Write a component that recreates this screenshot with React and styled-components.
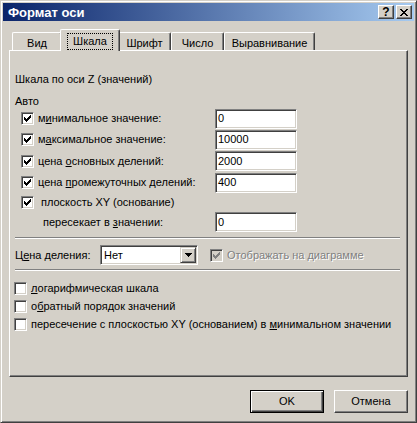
import React from "react"
import styled, { createGlobalStyle } from "styled-components"

const GlobalStyle = createGlobalStyle`
  body {
    margin: 0;
    background: #D4D0C8;
    font-family: "Liberation Sans", Arial, sans-serif;
    font-size: 11px;
    color: #000;
  }
`

const Window = styled.div`
  width: 417px;
  height: 423px;
  box-sizing: border-box;
  background: #D4D0C8;
  border: 1px solid;
  border-color: #D4D0C8 #404040 #404040 #D4D0C8;
  box-shadow: inset 1px 1px #fff, inset -1px -1px #808080;
  padding: 2px;
  display: flex;
  flex-direction: column;
`

const TitleBar = styled.div`
  height: 18px;
  flex: none;
  display: flex;
  align-items: center;
  padding: 0 2px 0 5px;
  background: linear-gradient(to right, #0A246A, #A6CAF0);
`

const Title = styled.div`
  flex: 1;
  color: #fff;
  font-weight: bold;
  font-size: 13px;
  line-height: 15px;
`

const TitleButton = styled.div`
  width: 16px;
  height: 14px;
  box-sizing: border-box;
  margin-left: 2px;
  background: #D4D0C8;
  border: 1px solid;
  border-color: #fff #404040 #404040 #fff;
  box-shadow: inset -1px -1px #808080;
  display: flex;
  align-items: center;
  justify-content: center;
  font-weight: bold;
  font-size: 12px;
  line-height: 12px;
`

const Body = styled.div`
  flex: 1;
  padding: 8px 6px 0 6px;
  display: flex;
  flex-direction: column;
`

const TabRow = styled.div`
  height: 21px;
  display: flex;
  align-items: flex-end;
  padding-left: 3px;
`

const Tab = styled.div`
  position: relative;
  box-sizing: border-box;
  width: ${p => p.$w}px;
  height: ${p => (p.$active ? 22 : 18)}px;
  margin: ${p => (p.$active ? "0 -2px -1px -2px" : "0")};
  z-index: ${p => (p.$active ? 1 : 0)};
  padding-top: ${p => (p.$active ? 3 : 4)}px;
  background: #D4D0C8;
  border-left: 1px solid #fff;
  border-top: 1px solid #fff;
  border-right: 1px solid #404040;
  border-top-left-radius: 2px;
  border-top-right-radius: 2px;
  box-shadow: inset -1px 0 #808080;
  text-align: center;
  line-height: 13px;
`

const FocusLabel = styled.span`
  display: inline-block;
  border: 1px dotted #000;
  padding: 1px 5px;
  line-height: 13px;
`

const Panel = styled.div`
  height: 327px;
  flex: none;
  box-sizing: border-box;
  border: 1px solid;
  border-color: #fff #404040 #404040 #fff;
  box-shadow: inset -1px -1px #808080;
  padding: 0 7px 0 5px;
  display: flex;
  flex-direction: column;
`

const Caption = styled.div`
  line-height: 13px;
  margin-top: ${p => p.$mt}px;
`

const AutoList = styled.div`
  padding-left: 6px;
  display: flex;
  flex-direction: column;
`

const AutoRow = styled.div`
  height: ${p => p.$h}px;
  display: grid;
  grid-template-columns: 17px 177px 82px;
  align-items: center;
  line-height: 13px;
`

const Label = styled.span`
  grid-column: ${p => p.$col || "auto"};
  padding-left: ${p => p.$pl || 0}px;
  white-space: nowrap;
  color: ${p => (p.$disabled ? "#808080" : "#000")};
  text-shadow: ${p => (p.$disabled ? "1px 1px 0 #fff" : "none")};
`

const U = styled.span`
  text-decoration: underline;
`

const Field = styled.div`
  grid-column: 3;
  width: 82px;
  height: 20px;
  box-sizing: border-box;
  background: #fff;
  border: 1px solid;
  border-color: #808080 #fff #fff #808080;
  box-shadow: inset 1px 1px #404040, inset -1px -1px #D4D0C8;
  padding-left: 2px;
  display: flex;
  align-items: center;
  line-height: 13px;
`

const Box = styled.div`
  width: 13px;
  height: 13px;
  box-sizing: border-box;
  background: ${p => (p.$disabled ? "#D4D0C8" : "#fff")};
  border: 1px solid;
  border-color: #808080 #fff #fff #808080;
  box-shadow: inset 1px 1px #404040, inset -1px -1px #D4D0C8;
  display: flex;
  align-items: center;
  justify-content: center;
  flex: none;
`

const Separator = styled.div`
  height: 0;
  border-top: 1px solid #808080;
  border-bottom: 1px solid #fff;
  margin-top: ${p => p.$mt}px;
`

const ScaleRow = styled.div`
  height: 20px;
  margin-top: 6px;
  display: flex;
  align-items: center;
  line-height: 13px;
`

const ScaleLabel = styled.span`
  width: 85px;
  flex: none;
`

const Select = styled.div`
  width: 98px;
  height: 20px;
  box-sizing: border-box;
  background: #fff;
  border: 1px solid;
  border-color: #808080 #fff #fff #808080;
  box-shadow: inset 1px 1px #404040, inset -1px -1px #D4D0C8;
  padding: 1px 1px 1px 3px;
  display: flex;
  align-items: center;
  justify-content: space-between;
  flex: none;
`

const DropButton = styled.div`
  width: 16px;
  height: 16px;
  box-sizing: border-box;
  background: #D4D0C8;
  border: 1px solid;
  border-color: #D4D0C8 #404040 #404040 #D4D0C8;
  box-shadow: inset 1px 1px #fff, inset -1px -1px #808080;
  display: flex;
  align-items: center;
  justify-content: center;
`

const ShowOption = styled.div`
  margin-left: 12px;
  display: flex;
  align-items: center;
  gap: 4px;
`

const OptionList = styled.div`
  margin-top: 8px;
  margin-left: -1px;
  display: flex;
  flex-direction: column;
`

const OptionRow = styled.div`
  height: 18px;
  display: flex;
  align-items: center;
  gap: 4px;
  line-height: 13px;
  white-space: nowrap;
`

const Footer = styled.div`
  margin-top: 13px;
  display: flex;
  justify-content: flex-end;
  gap: 10px;
`

const Button = styled.div`
  width: 74px;
  height: 23px;
  box-sizing: border-box;
  background: #D4D0C8;
  border: 1px solid;
  border-color: ${p => (p.$default ? "#000" : "#fff #404040 #404040 #fff")};
  box-shadow: ${p =>
    p.$default
      ? "inset 1px 1px #fff, inset -1px -1px #404040, inset -2px -2px #808080"
      : "inset -1px -1px #808080"};
  display: flex;
  align-items: center;
  justify-content: center;
  line-height: 13px;
`

const Check = ({ color = "#000" }) => (
  <svg width="7" height="7" viewBox="0 0 7 7" shapeRendering="crispEdges">
    <path
      fill={color}
      d="M0 2h1v3H0z M1 3h1v3H1z M2 4h1v3H2z M3 3h1v3H3z M4 2h1v3H4z M5 1h1v3H5z M6 0h1v3H6z"
    />
  </svg>
)

const CheckBox = ({ checked, disabled }) => (
  <Box $disabled={disabled}>
    {checked && <Check color={disabled ? "#808080" : "#000"} />}
  </Box>
)

const CloseGlyph = () => (
  <svg width="8" height="7" viewBox="0 0 8 7" shapeRendering="crispEdges">
    <path
      fill="#000"
      d="M0 0h2v1H0z M6 0h2v1H6z M1 1h2v1H1z M5 1h2v1H5z M2 2h4v1H2z M3 3h2v1H3z M2 4h4v1H2z M1 5h2v1H1z M5 5h2v1H5z M0 6h2v1H0z M6 6h2v1H6z"
    />
  </svg>
)

const DownArrow = () => (
  <svg width="7" height="4" viewBox="0 0 7 4" shapeRendering="crispEdges">
    <path fill="#000" d="M0 0h7v1H0z M1 1h5v1H1z M2 2h3v1H2z M3 3h1v1H3z" />
  </svg>
)

const tabs = [
  { label: "Вид", w: 50 },
  { label: "Шкала", w: 60, active: true },
  { label: "Шрифт", w: 53 },
  { label: "Число", w: 53 },
  { label: "Выравнивание", w: 91 },
]

const autoRows = [
  { label: <>м<U>и</U>нимальное значение:</>, value: "0", h: 21 },
  { label: <>м<U>а</U>ксимальное значение:</>, value: "10000", h: 21 },
  { label: <>цена <U>о</U>сновных делений:</>, value: "2000", h: 22 },
  { label: <>цена <U>п</U>ромежуточных делений:</>, value: "400", h: 21 },
]

const options = [
  <><U>л</U>огарифмическая шкала</>,
  <>о<U>б</U>ратный порядок значений</>,
  <>пересечение с плоскостью XY (основанием) в <U>м</U>инимальном значении</>,
]

const App = () => {
  return (
    <Window>
      <GlobalStyle />
      <TitleBar>
        <Title>Формат оси</Title>
        <TitleButton>?</TitleButton>
        <TitleButton><CloseGlyph /></TitleButton>
      </TitleBar>
      <Body>
        <TabRow>
          {tabs.map(t => (
            <Tab key={t.label} $w={t.w} $active={t.active}>
              {t.active ? <FocusLabel>{t.label}</FocusLabel> : t.label}
            </Tab>
          ))}
        </TabRow>
        <Panel>
          <Caption $mt={22}>Шкала по оси Z (значений)</Caption>
          <Caption $mt={9}>Авто</Caption>
          <AutoList>
            {autoRows.map((r, i) => (
              <AutoRow key={i} $h={r.h}>
                <CheckBox checked />
                <Label>{r.label}</Label>
                <Field>{r.value}</Field>
              </AutoRow>
            ))}
            <AutoRow $h={19}>
              <CheckBox checked />
              <Label $pl={3}>плоскость XY (основание)</Label>
            </AutoRow>
            <AutoRow $h={20}>
              <Label $col="1 / 3" $pl={22}>пересекает в <U>з</U>начении:</Label>
              <Field>0</Field>
            </AutoRow>
          </AutoList>
          <Separator $mt={5} />
          <ScaleRow>
            <ScaleLabel>Ц<U>е</U>на деления:</ScaleLabel>
            <Select>
              <span>Нет</span>
              <DropButton><DownArrow /></DropButton>
            </Select>
            <ShowOption>
              <CheckBox checked disabled />
              <Label $disabled>Отображать на диаграмме</Label>
            </ShowOption>
          </ScaleRow>
          <Separator $mt={4} />
          <OptionList>
            {options.map((o, i) => (
              <OptionRow key={i}>
                <CheckBox />
                <span>{o}</span>
              </OptionRow>
            ))}
          </OptionList>
        </Panel>
        <Footer>
          <Button $default>OK</Button>
          <Button>Отмена</Button>
        </Footer>
      </Body>
    </Window>
  )
}

export default App
